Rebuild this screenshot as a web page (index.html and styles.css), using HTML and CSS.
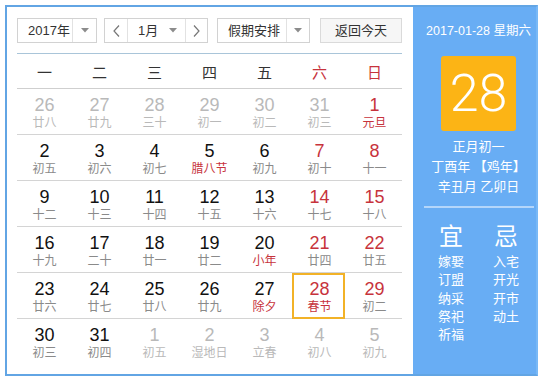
FILE: index.html
```html
<!DOCTYPE html>
<html lang="zh">
<head>
<meta charset="utf-8">
<title>万年历</title>
<link rel="stylesheet" href="styles.css">
</head>
<body>
<div class="widget">
  <div class="main">
    <div class="controls">
      <div class="select year">
        <span class="label">2017年</span>
        <span class="caret"><svg width="8" height="5" viewBox="0 0 8 5"><polygon points="0,0 8,0 4,4.5" fill="#8c8c8c"/></svg></span>
      </div>
      <div class="month-group">
        <span class="nav prev"><svg width="7" height="12" viewBox="0 0 7 12"><polyline points="6,0.5 1,6 6,11.5" fill="none" stroke="#777" stroke-width="1.2"/></svg></span>
        <span class="month">
          <span class="label">1月</span>
          <span class="caret plain"><svg width="8" height="5" viewBox="0 0 8 5"><polygon points="0,0 8,0 4,4.5" fill="#8c8c8c"/></svg></span>
        </span>
        <span class="nav next"><svg width="7" height="12" viewBox="0 0 7 12"><polyline points="1,0.5 6,6 1,11.5" fill="none" stroke="#777" stroke-width="1.2"/></svg></span>
      </div>
      <div class="select holiday">
        <span class="label">假期安排</span>
        <span class="caret"><svg width="8" height="5" viewBox="0 0 8 5"><polygon points="0,0 8,0 4,4.5" fill="#8c8c8c"/></svg></span>
      </div>
      <div class="today-btn">返回今天</div>
    </div>

    <div class="weekdays">
      <span>一</span><span>二</span><span>三</span><span>四</span><span>五</span><span class="we">六</span><span class="we">日</span>
    </div>

    <div class="week">
      <div class="cell other"><div class="n">26</div><div class="l">廿八</div></div>
      <div class="cell other"><div class="n">27</div><div class="l">廿九</div></div>
      <div class="cell other"><div class="n">28</div><div class="l">三十</div></div>
      <div class="cell other"><div class="n">29</div><div class="l">初一</div></div>
      <div class="cell other"><div class="n">30</div><div class="l">初二</div></div>
      <div class="cell other"><div class="n">31</div><div class="l">初三</div></div>
      <div class="cell we"><div class="n">1</div><div class="l fest">元旦</div></div>
    </div>
    <div class="week">
      <div class="cell"><div class="n">2</div><div class="l">初五</div></div>
      <div class="cell"><div class="n">3</div><div class="l">初六</div></div>
      <div class="cell"><div class="n">4</div><div class="l">初七</div></div>
      <div class="cell"><div class="n">5</div><div class="l fest">腊八节</div></div>
      <div class="cell"><div class="n">6</div><div class="l">初九</div></div>
      <div class="cell we"><div class="n">7</div><div class="l">初十</div></div>
      <div class="cell we"><div class="n">8</div><div class="l">十一</div></div>
    </div>
    <div class="week">
      <div class="cell"><div class="n">9</div><div class="l">十二</div></div>
      <div class="cell"><div class="n">10</div><div class="l">十三</div></div>
      <div class="cell"><div class="n">11</div><div class="l">十四</div></div>
      <div class="cell"><div class="n">12</div><div class="l">十五</div></div>
      <div class="cell"><div class="n">13</div><div class="l">十六</div></div>
      <div class="cell we"><div class="n">14</div><div class="l">十七</div></div>
      <div class="cell we"><div class="n">15</div><div class="l">十八</div></div>
    </div>
    <div class="week">
      <div class="cell"><div class="n">16</div><div class="l">十九</div></div>
      <div class="cell"><div class="n">17</div><div class="l">二十</div></div>
      <div class="cell"><div class="n">18</div><div class="l">廿一</div></div>
      <div class="cell"><div class="n">19</div><div class="l">廿二</div></div>
      <div class="cell"><div class="n">20</div><div class="l fest">小年</div></div>
      <div class="cell we"><div class="n">21</div><div class="l">廿四</div></div>
      <div class="cell we"><div class="n">22</div><div class="l">廿五</div></div>
    </div>
    <div class="week">
      <div class="cell"><div class="n">23</div><div class="l">廿六</div></div>
      <div class="cell"><div class="n">24</div><div class="l">廿七</div></div>
      <div class="cell"><div class="n">25</div><div class="l">廿八</div></div>
      <div class="cell"><div class="n">26</div><div class="l">廿九</div></div>
      <div class="cell"><div class="n">27</div><div class="l fest">除夕</div></div>
      <div class="cell we today"><div class="n">28</div><div class="l fest">春节</div></div>
      <div class="cell we"><div class="n">29</div><div class="l">初二</div></div>
    </div>
    <div class="week">
      <div class="cell"><div class="n">30</div><div class="l">初三</div></div>
      <div class="cell"><div class="n">31</div><div class="l">初四</div></div>
      <div class="cell other"><div class="n">1</div><div class="l">初五</div></div>
      <div class="cell other"><div class="n">2</div><div class="l">湿地日</div></div>
      <div class="cell other"><div class="n">3</div><div class="l">立春</div></div>
      <div class="cell other"><div class="n">4</div><div class="l">初八</div></div>
      <div class="cell other"><div class="n">5</div><div class="l">初九</div></div>
    </div>
  </div>

  <div class="side">
    <div class="side-date">2017-01-28 星期六</div>
    <div class="big">28</div>
    <div class="lunar">正月初一</div>
    <div class="lunar">丁酉年 【鸡年】</div>
    <div class="lunar">辛丑月 乙卯日</div>
    <div class="divider"></div>
    <div class="yiji">
      <div class="col">
        <div class="head">宜</div>
        <div class="item">嫁娶</div>
        <div class="item">订盟</div>
        <div class="item">纳采</div>
        <div class="item">祭祀</div>
        <div class="item">祈福</div>
      </div>
      <div class="col">
        <div class="head">忌</div>
        <div class="item">入宅</div>
        <div class="item">开光</div>
        <div class="item">开市</div>
        <div class="item">动土</div>
      </div>
    </div>
  </div>
</div>
</body>
</html>
```

FILE: styles.css
```css
body {
  margin: 0;
  background: #fff;
  font-family: "Liberation Sans", "Noto Sans CJK SC", sans-serif;
  color: #111;
}

.widget {
  display: flex;
  margin: 5px 0 0 5px;
  width: 533px;
  height: 371px;
  box-sizing: border-box;
  border: 2px solid #62a5e4;
  border-right-color: #78b8f6;
}

.main {
  width: 406px;
  box-sizing: border-box;
  padding: 11px 11px 0 10px;
}

/* controls */
.controls {
  display: flex;
  height: 25px;
  font-size: 13px;
  color: #333;
}

.select,
.month-group,
.today-btn {
  box-sizing: border-box;
  border: 1px solid #d2d2d2;
  background: #fff;
  display: flex;
}

.year { width: 80px; margin-right: 7px; }
.month-group { width: 104px; margin-right: 9px; }
.holiday { width: 93px; margin-right: 10px; }

.label {
  flex: 1;
  padding-left: 10px;
  line-height: 23px;
  white-space: nowrap;
}

.caret {
  width: 24px;
  box-sizing: border-box;
  border-left: 1px solid #e2e2e2;
  display: flex;
  align-items: center;
  justify-content: center;
}

.holiday .caret { width: 23px; }

.caret.plain {
  border-left: none;
  width: 24px;
}

.nav {
  width: 22px;
  display: flex;
  align-items: center;
  justify-content: center;
}

.prev { border-right: 1px solid #e2e2e2; }
.next { border-left: 1px solid #e2e2e2; width: 21px; }

.month {
  flex: 1;
  display: flex;
}

.today-btn {
  width: 82px;
  background: #f6f6f6;
  border-color: #dadada;
  justify-content: center;
  line-height: 23px;
}

/* weekdays */
.weekdays {
  margin-top: 10px;
  border-top: 1px solid #a9c5d9;
  border-bottom: 1px solid #cfcfcf;
  height: 34px;
  display: grid;
  grid-template-columns: repeat(7, 55px);
  align-items: center;
  text-align: center;
  font-size: 15px;
  color: #333;
}

.weekdays .we { color: #c7333c; }

/* weeks */
.week {
  display: grid;
  grid-template-columns: repeat(7, 55px);
  height: 45px;
  border-bottom: 1px solid #d4d4d4;
}

.week:last-child { border-bottom: none; }

.cell {
  position: relative;
  text-align: center;
  padding-top: 6px;
}

.n {
  font-size: 18px;
  line-height: 20px;
  color: #111;
}

.l {
  font-size: 12px;
  line-height: 16px;
  color: #8a8a8a;
  white-space: nowrap;
}

.cell.we .n { color: #c7333c; }
.l.fest { color: #c7333c; }

.cell.other .n,
.cell.other .l { color: #b9b9b9; }

.cell.today::after {
  content: "";
  position: absolute;
  left: 0;
  top: 0;
  width: 53px;
  height: 46px;
  box-sizing: border-box;
  border: 2px solid #f2b227;
}

/* side panel */
.side {
  flex: 1;
  background: #68adf4;
  color: #fff;
  text-align: center;
  padding: 14px 0 0 8px;
  box-sizing: border-box;
}

.side-date {
  font-size: 12.5px;
  line-height: 20px;
  white-space: nowrap;
}

.big {
  width: 75px;
  height: 75px;
  margin: 15px auto 6px;
  background: #fcb415;
  border-radius: 3px;
  font-family: Roboto, "Liberation Sans", sans-serif;
  font-weight: 300;
  font-size: 52px;
  line-height: 75px;
}

.lunar {
  font-size: 13px;
  line-height: 20px;
  white-space: nowrap;
}

.divider {
  width: 110px;
  height: 2px;
  margin: 9px auto 0;
  background: rgba(255, 255, 255, 0.5);
}

.yiji {
  display: flex;
  justify-content: center;
  margin-top: 14px;
}

.col { width: 55px; }

.head {
  font-size: 24px;
  line-height: 30px;
  margin-bottom: 1px;
}

.item {
  font-size: 13px;
  line-height: 18.25px;
}
```
